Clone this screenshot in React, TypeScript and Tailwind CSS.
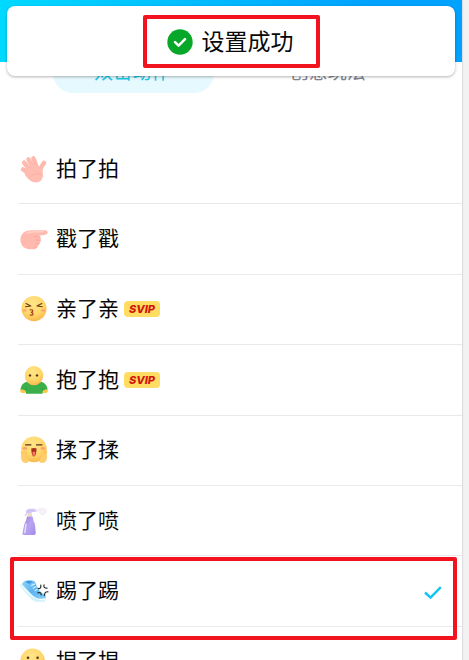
import type { ReactNode } from "react";

const Hand = () => (
  <>
    <g stroke="#ffb9ad" strokeWidth="4.4" strokeLinecap="round" fill="none">
      <path d="M11 20L4 15.4" />
      <path d="M12 17L5 8.6" />
      <path d="M15 15L9.4 5.4" />
      <path d="M18 14L14.4 4.2" />
      <path d="M20.5 17.5C21.5 15 22.4 12 25 8.8" />
    </g>
    <path d="M7 17L15 10.5L20 12.5L23.4 13.5C23.4 18 26 25 20 27.8C14 30.4 9 25.5 5.5 20Z" fill="#ffbcb0" />
    <path d="M12 22C15 19 20 19 22 21" stroke="#fba99e" strokeWidth=".8" fill="none" strokeLinecap="round" />
  </>
);

const Fist = () => (
  <>
    <path d="M4 9Q7 6 12 6.2H26.5Q28.8 6.4 28.8 8.6Q28.6 10.6 26 10.8L20 11.8Q22.5 13 21.6 15.6Q22 17.6 20.4 19Q20.4 21.6 18.4 22.4Q18 25.2 14 25.2Q6 26 2.8 21Q-.6 14 4 9Z" fill="#ffb9ae" />
    <path d="M15 12.6Q18 10.8 21 13M17 16.2H21.4M17 19.6H20.4M15.4 22.8H18" stroke="#f7a59c" strokeWidth=".8" fill="none" strokeLinecap="round" />
    <path d="M8 9Q13 7.4 24 7.7" stroke="#ffcfc6" strokeWidth="1.6" fill="none" strokeLinecap="round" />
  </>
);

const Kiss = () => (
  <>
    <circle cx="15" cy="14.6" r="12.6" fill="url(#face)" />
    <g stroke="#6b3a16" strokeWidth="1.1" fill="none" strokeLinecap="round" strokeLinejoin="round">
      <path d="M7 9.6L11.8 12L6.6 12.8" />
      <path d="M22.8 9.6L18 12L23.2 12.8" />
    </g>
    <path d="M11.2 15.8Q14.4 15.4 13.6 17.4Q13 18.2 12 18.3Q14.6 18.6 13.8 20.6Q13 21.6 11.2 21" stroke="#a43d1c" strokeWidth="1.2" fill="none" strokeLinecap="round" />
    <ellipse cx="5.6" cy="16.4" rx="2.2" ry="1.2" fill="#ff8f79" opacity=".7" />
    <ellipse cx="24" cy="16.4" rx="2.2" ry="1.2" fill="#ff8f79" opacity=".7" />
  </>
);

const Hug = () => (
  <>
    <ellipse cx="4.2" cy="25.4" rx="3" ry="2.6" fill="#f9c84c" />
    <ellipse cx="25.8" cy="25.4" rx="3" ry="2.6" fill="#f9c84c" />
    <path d="M8.5 16.4H21.5Q27.4 17.6 28.6 24L23.6 25.6V28.8H6.8V25.6L1.4 24Q2.6 17.6 8.5 16.4Z" fill="#3bb04a" />
    <path d="M7 22.5V26M23.4 22.5V26" stroke="#2a9a3f" strokeWidth=".7" />
    <ellipse cx="15" cy="10.6" rx="9.2" ry="9.6" fill="url(#face)" />
    <circle cx="11" cy="10.4" r="1.2" fill="#593313" />
    <circle cx="18" cy="10.4" r="1.2" fill="#593313" />
  </>
);

const Rub = () => (
  <>
    <circle cx="15" cy="14.4" r="12.8" fill="url(#face)" />
    <path d="M6.6 9.8H12M17.4 9.8H23" stroke="#5d3215" strokeWidth="1.2" strokeLinecap="round" />
    <path d="M12.2 13.4Q15 12.6 17.6 13.4Q17.2 21.4 14.8 21.6Q12.6 21 12.2 13.4Z" fill="#a7301d" />
    <path d="M13.4 17.4Q15 15.6 16.4 17.4Q16 21 14.8 21Q13.6 20.4 13.4 17.4Z" fill="#ff7863" />
    <ellipse cx="6" cy="13.4" rx="2.4" ry="1.3" fill="#ff8e70" opacity=".75" />
    <ellipse cx="23.8" cy="13.4" rx="2.4" ry="1.3" fill="#ff8e70" opacity=".75" />
    <path d="M2.2 16.6Q3.6 16 4.4 18.4Q6 15.2 7.2 16.6L7.6 20.4Q11 25.6 8.4 27.4Q3.2 28.4 2.4 23.4Z" fill="#ffce6a" stroke="#f8b650" strokeWidth=".4" />
    <path d="M27.8 16.6Q26.4 16 25.6 18.4Q24 15.2 22.8 16.6L22.4 20.4Q19 25.6 21.6 27.4Q26.8 28.4 27.6 23.4Z" fill="#ffce6a" stroke="#f8b650" strokeWidth=".4" />
  </>
);

const Spray = () => (
  <>
    <path d="M7 5.4Q7.6 2.8 11 2.8H16V6H12.6V7.4H8.6L6.6 10.6L5.6 9.8L7.4 7.2Z" fill="#d3c4f8" />
    <path d="M16 3.6L18.4 3.8V5.6L16 6Z" fill="#e2d7fb" />
    <rect x="8.6" y="7.4" width="4.4" height="3.2" fill="#eedbbd" />
    <path d="M8 10.6H13.6Q14 14 16 18.6L16.8 27.6Q16.6 29 14.8 29H5Q3.2 29 3.4 27.4L5.4 18Q7.6 14 8 10.6Z" fill="url(#bottle)" />
    <path d="M7 18L5.8 26.4" stroke="#e7ddff" strokeWidth="1.5" strokeLinecap="round" />
    <path d="M19 4Q19.4 1.6 21.8 2.8Q24.4 .8 25.6 3.2Q28.4 3 27.2 6Q25.6 9.4 22.8 9Q20.8 7.6 19 4Z" fill="#f4f1f9" stroke="#e8e3f0" strokeWidth=".5" />
  </>
);

const Shoe = () => (
  <>
    <path d="M.8 9.4L3.6 6.6L27 20.4L26 25.8H17Q12.4 25 .8 9.4Z" fill="#d3f1fb" />
    <path d="M3.4 8.4Q4 5 7.4 4.6Q12 3.4 15.8 5.6L19 12.4Q21.4 16.8 26.6 18.8V22.4Q20.4 25 14.6 20.4Z" fill="url(#shoe)" />
    <path d="M6.4 5.6Q10.6 3.8 13.6 5.8Q10 10 6.4 5.6Z" fill="#3d9ade" />
    <path d="M2.4 9.4Q10.6 18.8 15.6 21.8Q20.4 24.4 26 23" stroke="#effcff" strokeWidth="1.3" fill="none" />
    <path d="M12.6 9.6L15.6 8M14.2 12.2L17.2 10.4M16 14.6L18.8 12.8" stroke="#def5ff" strokeWidth="1.1" strokeLinecap="round" />
    <g stroke="#2a2d31" strokeWidth="1.2" fill="none" strokeLinecap="round">
      <path d="M19 12.6Q22.4 13 21.8 9M25 8.8Q24.2 12.4 28 12.2M18.8 16.8Q22.2 15.8 22.2 19M29 15.8Q25.4 15.4 25.4 19.6" />
    </g>
  </>
);

const Pinch = () => (
  <>
    <circle cx="13.6" cy="15" r="12.4" fill="url(#face)" />
    <circle cx="9" cy="11.8" r="1.3" fill="#593313" />
    <circle cx="18.6" cy="11.8" r="1.3" fill="#593313" />
    <path d="M9.6 18.6Q13.6 21.6 17.8 18.6" stroke="#8c3e14" strokeWidth="1.2" fill="none" strokeLinecap="round" />
  </>
);

type Action = { name: string; icon: ReactNode; svip?: boolean; selected?: boolean };

const actions: Action[] = [
  { name: "拍了拍", icon: <Hand /> },
  { name: "戳了戳", icon: <Fist /> },
  { name: "亲了亲", icon: <Kiss />, svip: true },
  { name: "抱了抱", icon: <Hug />, svip: true },
  { name: "揉了揉", icon: <Rub /> },
  { name: "喷了喷", icon: <Spray /> },
  { name: "踢了踢", icon: <Shoe />, selected: true },
  { name: "捏了捏", icon: <Pinch /> },
];

function ActionRow({ name, icon, svip, selected }: Action) {
  return (
    <li className="relative border-b border-[#e9e9ec]">
      <button type="button" aria-pressed={!!selected} className="flex h-full w-full items-center pr-5 text-left">
        <svg viewBox="0 0 30 30" className="ml-px size-[30px] shrink-0" aria-hidden="true">
          {icon}
        </svg>
        <span className="ml-[7px] pb-1 text-[21px] leading-[30px] text-[#080808]">{name}</span>
        {svip && (
          <span className="ml-[5px] w-9 rounded-[4px] bg-[#ffdc62] text-center font-['Inter',sans-serif] text-[11px] leading-4 font-extrabold text-[#d0160c] italic">
            SVIP
          </span>
        )}
        {selected && (
          <svg viewBox="0 0 18 14" className="mt-1 ml-auto h-[14px] w-[18px]" fill="none" aria-hidden="true">
            <path d="M1 6.5L6.6 11.6L16.8 1.2" stroke="#12c5f5" strokeWidth="2.5" />
          </svg>
        )}
      </button>
      {selected && (
        <div className="pointer-events-none absolute top-px right-[5px] -bottom-3.5 -left-2 z-10 rounded-[2px] border-4 border-[#f2131f]" />
      )}
    </li>
  );
}

export default function App() {
  return (
    <div className="h-screen overflow-hidden bg-[#f2f2f3] pr-[7px] font-['Noto_Sans_CJK_SC',sans-serif]">
      <svg className="absolute size-0" aria-hidden="true">
        <defs>
          <radialGradient id="face" cx=".45" cy=".3" r=".75">
            <stop offset="0" stopColor="#ffe58b" />
            <stop offset=".6" stopColor="#ffd668" />
            <stop offset="1" stopColor="#f8b348" />
          </radialGradient>
          <linearGradient id="bottle" x1="0" y1="0" x2="1" y2="1">
            <stop offset="0" stopColor="#9e83df" />
            <stop offset=".5" stopColor="#b9a4f2" />
            <stop offset="1" stopColor="#a28be4" />
          </linearGradient>
          <linearGradient id="shoe" x1="0" y1="0" x2="1" y2="1">
            <stop offset="0" stopColor="#8fd3fa" />
            <stop offset=".5" stopColor="#5db4ef" />
            <stop offset="1" stopColor="#86d0f8" />
          </linearGradient>
        </defs>
      </svg>
      <main className="relative min-h-full bg-white shadow-[1px_0_1px_#dedee2]">
        <header className="h-[62px] bg-linear-to-r from-[#00d9ff] to-[#00a2ff] to-80%" />
        <div
          role="status"
          className="absolute inset-x-[7px] top-[6px] z-10 flex h-[70px] items-start justify-center rounded-lg bg-white pt-[9px] shadow-[0_1px_3px_rgba(0,0,0,0.3)]"
        >
          <div className="flex h-[53px] items-center gap-[9px] rounded-[2px] border-4 border-[#f2131f] pr-[22px] pl-[20px]">
            <svg viewBox="0 0 26 26" className="size-[26px]" fill="none" aria-hidden="true">
              <circle cx="13" cy="13" r="12.7" fill="#07a829" />
              <path d="M8 13.2L11.6 16.6L18 10.2" stroke="white" strokeWidth="2.5" strokeLinecap="round" strokeLinejoin="round" />
            </svg>
            <span className="pb-1 text-[23px] leading-8 text-[#080808]">设置成功</span>
          </div>
        </div>
        <nav className="-mt-[9px] grid grid-cols-2 gap-[35px] px-[53px] text-[19px] leading-6">
          <button type="button" className="h-10 rounded-full bg-[#e5f9ff] pr-0.5 pb-1 text-[#1cc7e4]">
            双击动作
          </button>
          <button type="button" className="h-10 rounded-full pr-0.5 pb-1 text-[#7f838f]">
            创意玩法
          </button>
        </nav>
        <ul className="mt-[41px] ml-[18px] grid h-[563px] auto-rows-fr">
          {actions.map((action) => (
            <ActionRow key={action.name} {...action} />
          ))}
        </ul>
      </main>
    </div>
  );
}
